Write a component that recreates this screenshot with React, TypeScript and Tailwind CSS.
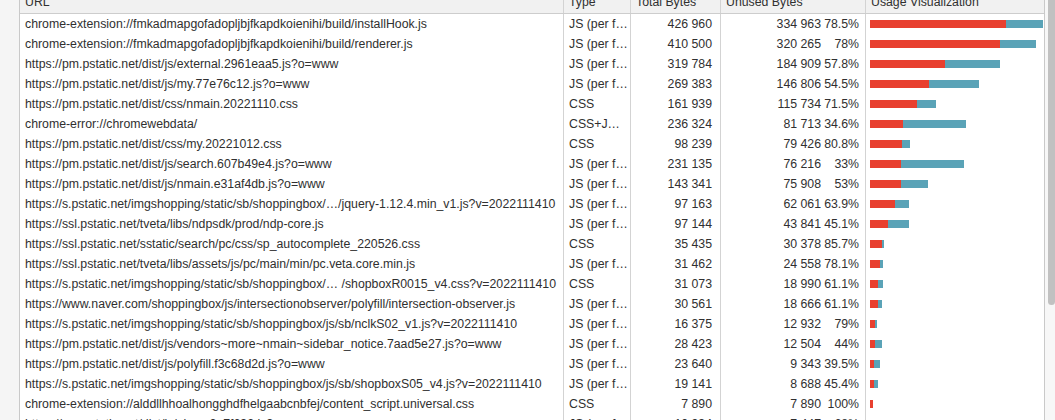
import React from 'react'

type Row = {
  url: string
  type: string
  total: number
  unused: number
  pct: string
}

const ROWS: Row[] = [
  { url: 'chrome-extension://fmkadmapgofadopljbjfkapdkoienihi/build/installHook.js', type: 'JS (per f…', total: 426960, unused: 334963, pct: '78.5%' },
  { url: 'chrome-extension://fmkadmapgofadopljbjfkapdkoienihi/build/renderer.js', type: 'JS (per f…', total: 410500, unused: 320265, pct: '78%' },
  { url: 'https://pm.pstatic.net/dist/js/external.2961eaa5.js?o=www', type: 'JS (per f…', total: 319784, unused: 184909, pct: '57.8%' },
  { url: 'https://pm.pstatic.net/dist/js/my.77e76c12.js?o=www', type: 'JS (per f…', total: 269383, unused: 146806, pct: '54.5%' },
  { url: 'https://pm.pstatic.net/dist/css/nmain.20221110.css', type: 'CSS', total: 161939, unused: 115734, pct: '71.5%' },
  { url: 'chrome-error://chromewebdata/', type: 'CSS+J…', total: 236324, unused: 81713, pct: '34.6%' },
  { url: 'https://pm.pstatic.net/dist/css/my.20221012.css', type: 'CSS', total: 98239, unused: 79426, pct: '80.8%' },
  { url: 'https://pm.pstatic.net/dist/js/search.607b49e4.js?o=www', type: 'JS (per f…', total: 231135, unused: 76216, pct: '33%' },
  { url: 'https://pm.pstatic.net/dist/js/nmain.e31af4db.js?o=www', type: 'JS (per f…', total: 143341, unused: 75908, pct: '53%' },
  { url: 'https://s.pstatic.net/imgshopping/static/sb/shoppingbox/…/jquery-1.12.4.min_v1.js?v=2022111410', type: 'JS (per f…', total: 97163, unused: 62061, pct: '63.9%' },
  { url: 'https://ssl.pstatic.net/tveta/libs/ndpsdk/prod/ndp-core.js', type: 'JS (per f…', total: 97144, unused: 43841, pct: '45.1%' },
  { url: 'https://ssl.pstatic.net/sstatic/search/pc/css/sp_autocomplete_220526.css', type: 'CSS', total: 35435, unused: 30378, pct: '85.7%' },
  { url: 'https://ssl.pstatic.net/tveta/libs/assets/js/pc/main/min/pc.veta.core.min.js', type: 'JS (per f…', total: 31462, unused: 24558, pct: '78.1%' },
  { url: 'https://s.pstatic.net/imgshopping/static/sb/shoppingbox/… /shopboxR0015_v4.css?v=2022111410', type: 'CSS', total: 31073, unused: 18990, pct: '61.1%' },
  { url: 'https://www.naver.com/shoppingbox/js/intersectionobserver/polyfill/intersection-observer.js', type: 'JS (per f…', total: 30561, unused: 18666, pct: '61.1%' },
  { url: 'https://s.pstatic.net/imgshopping/static/sb/shoppingbox/js/sb/nclkS02_v1.js?v=2022111410', type: 'JS (per f…', total: 16375, unused: 12932, pct: '79%' },
  { url: 'https://pm.pstatic.net/dist/js/vendors~more~nmain~sidebar_notice.7aad5e27.js?o=www', type: 'JS (per f…', total: 28423, unused: 12504, pct: '44%' },
  { url: 'https://pm.pstatic.net/dist/js/polyfill.f3c68d2d.js?o=www', type: 'JS (per f…', total: 23640, unused: 9343, pct: '39.5%' },
  { url: 'https://s.pstatic.net/imgshopping/static/sb/shoppingbox/js/sb/shopboxS05_v4.js?v=2022111410', type: 'JS (per f…', total: 19141, unused: 8688, pct: '45.4%' },
  { url: 'chrome-extension://alddllhhoalhongghdfhelgaabcnbfej/content_script.universal.css', type: 'CSS', total: 7890, unused: 7890, pct: '100%' },
  { url: 'https://pm.pstatic.net/dist/js/nlog.c2a7f632.js?o=www', type: 'JS (per f…', total: 10934, unused: 7447, pct: '68%' },
]

const MAX_TOTAL = 426960
const MAX_BAR = 173

// 426960 -> "426 960"
function fmt(n: number) {
  return n.toString().replace(/\B(?=(\d{3})+(?!\d))/g, ' ')
}

const GRID = 'grid grid-cols-[544px_67px_90px_145px_1fr]'
const CELL = 'border-r border-[#d3d3d3] px-[5px] overflow-hidden whitespace-nowrap'

export default function App() {
  return (
    <div
      className="flex h-[420px] w-[1055px] overflow-hidden bg-white text-[12.3px] text-[#303030]"
      style={{ fontFamily: '"Liberation Sans", Arial, sans-serif' }}
    >
      {/* left gutter */}
      <div className="w-[19px] shrink-0 bg-[#f5f5f5]" />

      {/* table */}
      <div className="flex-1 border-x border-[#c9c9c9]">
        <div className="-mt-[8px]">
          {/* Header */}
          <div className={`${GRID} h-[22px] items-center border-b border-[#cdcdcd] bg-[#f1f1f1] leading-[21px]`}>
            <div className={CELL}>URL</div>
            <div className={CELL}>Type</div>
            <div className={CELL}>Total Bytes</div>
            <div className={CELL}>Unused Bytes</div>
            <div className="overflow-hidden whitespace-nowrap px-[5px]">Usage Visualization</div>
          </div>

          {ROWS.map((r, i) => {
            const width = (r.total / MAX_TOTAL) * MAX_BAR
            const redPct = (r.unused / r.total) * 100
            return (
              <div key={i} className={`${GRID} h-[20px] leading-[20px]`}>
                <div className={CELL}>{r.url}</div>
                <div className={`${CELL} pr-0`}>{r.type}</div>
                <div className={`${CELL} pr-[8px] text-right`}>{fmt(r.total)}</div>
                <div className={`${CELL} flex justify-end pr-[6px]`}>
                  <span>{fmt(r.unused)}</span>
                  <span className="w-[38px] text-right">{r.pct}</span>
                </div>
                <div className="flex items-center pl-[4px]">
                  <div className="flex h-[8px]" style={{ width }}>
                    <div className="h-full bg-[#e8402f]" style={{ width: `${redPct}%` }} />
                    <div className="h-full flex-1 bg-[#5aa3b7]" />
                  </div>
                </div>
              </div>
            )
          })}
        </div>
      </div>

      {/* scrollbar */}
      <div className="w-[10px] shrink-0 bg-[#f7f7f7] pl-[3px]">
        <div className="h-[305px] w-[7px] rounded-b-[4px] bg-[#c1c1c1]" />
      </div>
    </div>
  )
}
